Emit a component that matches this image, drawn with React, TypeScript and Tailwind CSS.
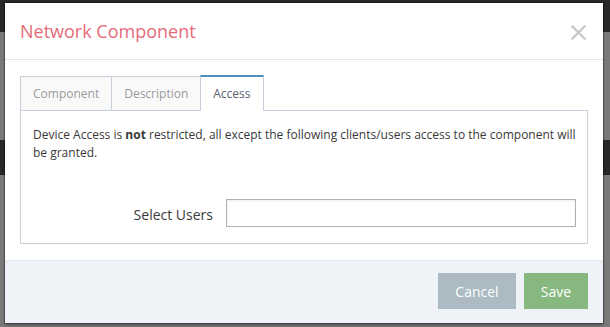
import React from "react";

export default function App() {
  const font = { fontFamily: '"Open Sans", "Liberation Sans", sans-serif' };
  return (
    <div className="relative w-[610px] h-[327px] overflow-hidden flex flex-col bg-[#7a7a7a]" style={font}>
      <div className="h-[32px] bg-[#282828]" />
      <div className="h-[108px] bg-[#7a7a7a]" />
      <div className="h-[35px] bg-[#282828]" />
      <div className="flex-1 bg-[#7a7a7a]" />

      <div className="absolute left-[5px] top-[3px] w-[598px] h-[320px] bg-white flex flex-col shadow-[0_0_0_1px_rgba(0,0,0,0.25),0_2px_3px_rgba(0,0,0,0.35)]">
        <div className="h-[57px] border-b border-[#e5e5e5] flex items-center justify-between pl-[15px] pr-[17px]">
          <h3 className="text-[18px] text-[#e56b79] font-normal leading-[24px]">Network Component</h3>
          <svg width="15" height="15" viewBox="0 0 15 15" className="mt-[3px]">
            <path d="M1.5 1.5 L13.5 13.5 M13.5 1.5 L1.5 13.5" stroke="#c9c9c9" strokeWidth="2.4" strokeLinecap="square" />
          </svg>
        </div>

        <div className="h-[200px] pt-[15px] px-[15px] pb-[16px] flex flex-col">
          <div className="flex items-end h-[35px]">
            <div className="h-[34px] -mr-px border-t border-l border-r border-[#c5d0dc] bg-[#f9f9f9] px-[12px] flex items-center text-[12px] text-[#999]">
              Component
            </div>
            <div className="h-[34px] -mr-px border-t border-l border-r border-[#c5d0dc] bg-[#f9f9f9] px-[12px] flex items-center text-[12px] text-[#999]">
              Description
            </div>
            <div className="relative z-10 h-[36px] -mb-px border-t-2 border-t-[#4c8fbd] border-l border-r border-[#c5d0dc] bg-white px-[12px] flex items-center text-[12px] text-[#576373]">
              Access
            </div>
          </div>
          <div className="h-[134px] border border-[#c5d0dc] pt-[15px] pl-[12px] pr-[10px] pb-[16px]">
            <p className="text-[12px] leading-[18px] text-[#393939]">
              Device Access is <b className="font-bold">not</b> restricted, all except the following clients/users access to the component will be granted.
            </p>
            <div className="flex items-start mt-[37px]">
              <label className="w-[180px] text-right text-[14px] leading-[20px] pt-[6px] text-[#393939]">Select Users</label>
              <input
                type="text"
                className="ml-[13px] w-[350px] h-[28px] border border-[#b0b0b0] bg-white shadow-[inset_0_1px_2px_rgba(0,0,0,0.08)] outline-none"
              />
            </div>
          </div>
        </div>

        <div className="flex-1 bg-[#eff3f8] border-t border-[#e4e9ee] pt-[12px] pr-[15px] flex justify-end items-start gap-[8px]">
          <button className="w-[78px] h-[36px] bg-[#abbac3] text-white text-[14px]">Cancel</button>
          <button className="w-[64px] h-[36px] bg-[#87b87f] text-white text-[14px]">Save</button>
        </div>
      </div>
    </div>
  );
}
